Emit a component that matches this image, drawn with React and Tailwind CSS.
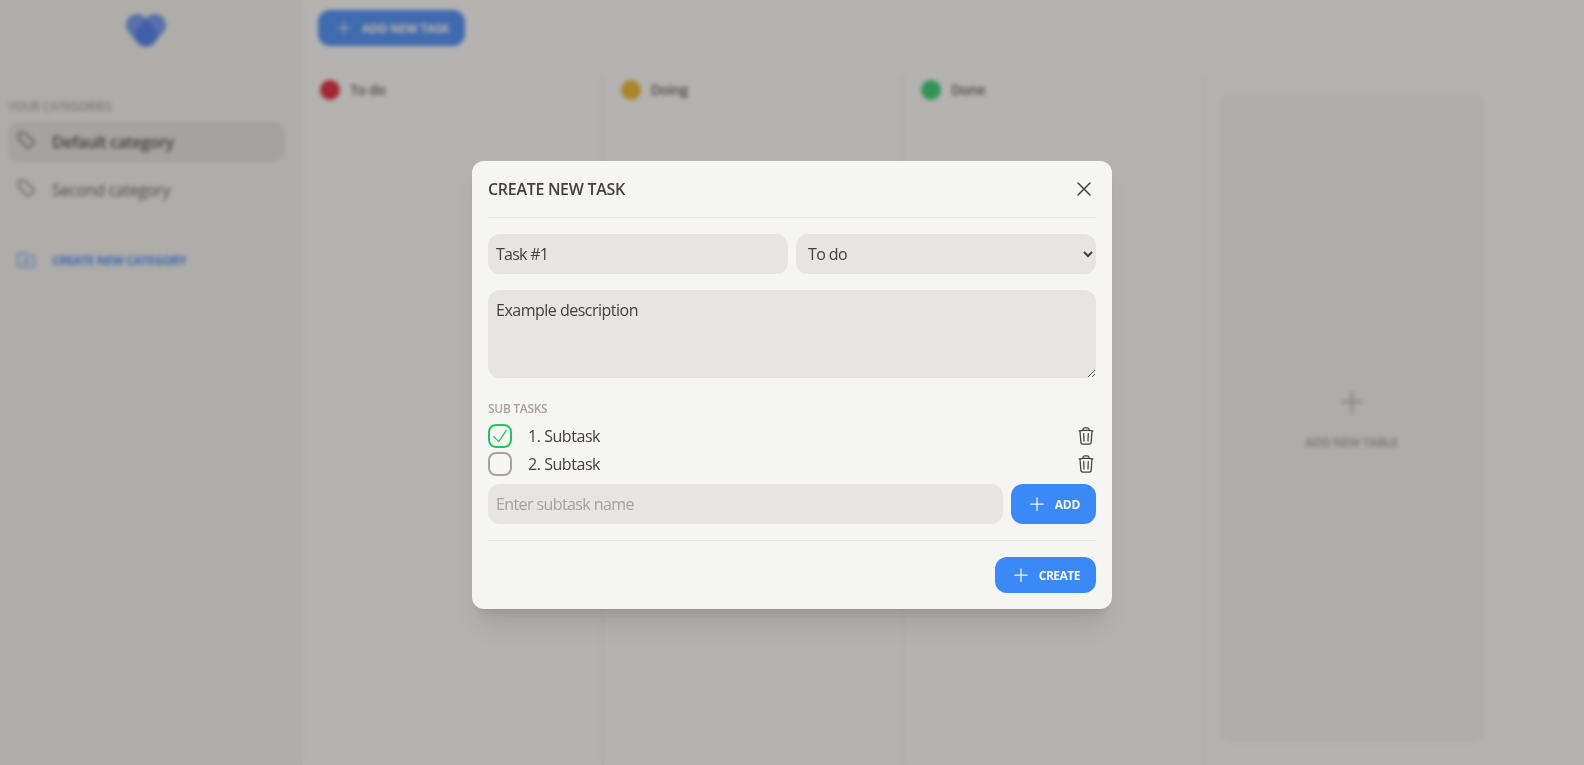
import { HiOutlineCheck, HiOutlineFolderPlus, HiOutlinePlus, HiOutlineTag, HiOutlineTrash, HiOutlineXMark } from "react-icons/hi2";

function Column({ color, title }) {
  return (
    <section className="w-[300.5px] shrink-0 border-r border-[#e7e5e4] pl-[18px]">
      <h2 className="flex items-center gap-2.5 pt-1">
        <span className={`size-5 rounded-full ${color}`} />
        <span className="text-[14px] leading-5 font-semibold tracking-[-0.4px] text-[#57534e]">{title}</span>
      </h2>
    </section>
  );
}

function Category({ label, active }) {
  return (
    <li className={`flex h-10 items-center gap-4 rounded-xl px-2 ${active ? "bg-[#e1dfdc] font-semibold tracking-[-0.4px] text-[#44403c]" : "tracking-[-0.33px] text-[#57534e]"}`}>
      <HiOutlineTag className="mb-1 size-5" />
      <span className="text-base">{label}</span>
    </li>
  );
}

function Subtask({ label, done }) {
  return (
    <li className="flex h-7 items-center">
      <span className={`flex size-6 items-center justify-center rounded-lg border-2 ${done ? "border-[#22c55e]" : "border-[#a8a29e]"}`}>
        {done && <HiOutlineCheck className="size-5 shrink-0 text-[#22c55e]" />}
      </span>
      <span className="ml-4 flex-1 text-base tracking-[-0.45px]">{label}</span>
      <HiOutlineTrash className="size-5" />
    </li>
  );
}

function PrimaryButton({ children, className }) {
  return (
    <button className={`flex items-center justify-end gap-2 rounded-xl px-4 text-xs font-bold text-[#f5f5f4] ${className}`}>
      <HiOutlinePlus className="size-5 shrink-0" />
      <span className="pt-0.5 whitespace-nowrap">{children}</span>
    </button>
  );
}

export default function App() {
  return (
    <div className="h-[765px] w-full overflow-hidden bg-[#fafaf9] font-['Open_Sans',sans-serif] text-[#44403c]">
      <div className="flex h-full">
        <aside className="w-[302px] shrink-0 border-r border-[#e7e5e4] bg-[#f0f0ec] px-2">
          <div className="flex justify-center pt-[13px] pr-2.5">
            <svg viewBox="0 0 42 34" className="h-[34px] w-[42px]" fill="none" stroke="#2563eb" strokeWidth="22" strokeLinecap="round">
              <path d="M12 12L21 22.5" opacity="0.7" />
              <path d="M30 12L21 22.5" opacity="0.7" />
            </svg>
          </div>
          <h3 className="mt-[52px] text-xs leading-4 font-semibold tracking-[-0.3px] text-[#a8a29e]">YOUR CATEGORIES</h3>
          <ul className="mt-[7px] flex w-[277px] flex-col gap-2">
            <Category label="Default category" active />
            <Category label="Second category" />
          </ul>
          <button className="mt-[30px] flex h-10 items-center gap-4 px-2 text-[#3b82f6]">
            <HiOutlineFolderPlus className="size-5" />
            <span className="pt-px text-xs font-bold tracking-[-0.4px]">CREATE NEW CATEGORY</span>
          </button>
        </aside>
        <main className="flex min-w-0 flex-1 flex-col">
          <div className="px-4 pt-2.5">
            <PrimaryButton className="h-9 w-[147px] bg-[#3b82f6] tracking-[-0.25px]">ADD NEW TASK</PrimaryButton>
          </div>
          <div className="mt-[30px] flex flex-1">
            <Column color="bg-[#dc1226]" title="To do" />
            <Column color="bg-[#e9ad18]" title="Doing" />
            <Column color="bg-[#22c55e]" title="Done" />
            <div className="mt-[18px] mb-[22px] ml-[15px] flex w-[266px] flex-col items-center justify-center rounded-xl bg-[#f0f0ec] text-[#a8a29e]">
              <HiOutlinePlus className="size-8" />
              <span className="mt-4 pt-px text-xs leading-4 font-bold tracking-[-0.4px]">ADD NEW TABLE</span>
            </div>
          </div>
        </main>
      </div>

      <div className="fixed inset-0 flex items-center justify-center bg-[rgb(74,72,70)]/40 backdrop-blur-[2px]">
        <div className="mt-1 w-[640px] rounded-xl bg-[#f5f5f4] p-4 shadow-xl">
          <header className="flex h-6 items-center justify-between">
            <h1 className="pt-px text-base font-semibold tracking-[-0.3px]">CREATE NEW TASK</h1>
            <HiOutlineXMark className="size-6" />
          </header>
          <hr className="mt-4 border-[#e7e5e4]" />
          <div className="mt-4 flex gap-2">
            <input className="h-10 w-[300px] rounded-xl bg-[#e7e5e4] p-2 tracking-[-0.75px]" defaultValue="Task #1" />
            <select className="h-10 w-[300px] rounded-xl bg-[#e7e5e4] p-2 tracking-[-0.6px]">
              <option>To do</option>
            </select>
          </div>
          <textarea className="mt-4 block h-[88px] w-full rounded-xl bg-[#e7e5e4] p-2 tracking-[-0.5px]" defaultValue="Example description" />
          <h2 className="mt-[23px] text-xs font-semibold tracking-[-0.3px] text-[#a8a29e]">SUB TASKS</h2>
          <ul className="mt-[5px]">
            <Subtask label="1. Subtask" done />
            <Subtask label="2. Subtask" />
          </ul>
          <div className="mt-1.5 flex gap-2">
            <input className="h-10 flex-1 rounded-xl bg-[#e7e5e4] p-2 tracking-[-0.6px] placeholder:text-[#a8a29e]" placeholder="Enter subtask name" />
            <PrimaryButton className="h-10 w-[85px] bg-[#3b89f6] tracking-[-0.3px]">ADD</PrimaryButton>
          </div>
          <hr className="mt-4 border-[#e5e7eb]" />
          <div className="mt-4 flex justify-end">
            <PrimaryButton className="h-9 w-[101px] bg-[#3b89f6] tracking-[-0.5px]">CREATE</PrimaryButton>
          </div>
        </div>
      </div>
    </div>
  );
}
